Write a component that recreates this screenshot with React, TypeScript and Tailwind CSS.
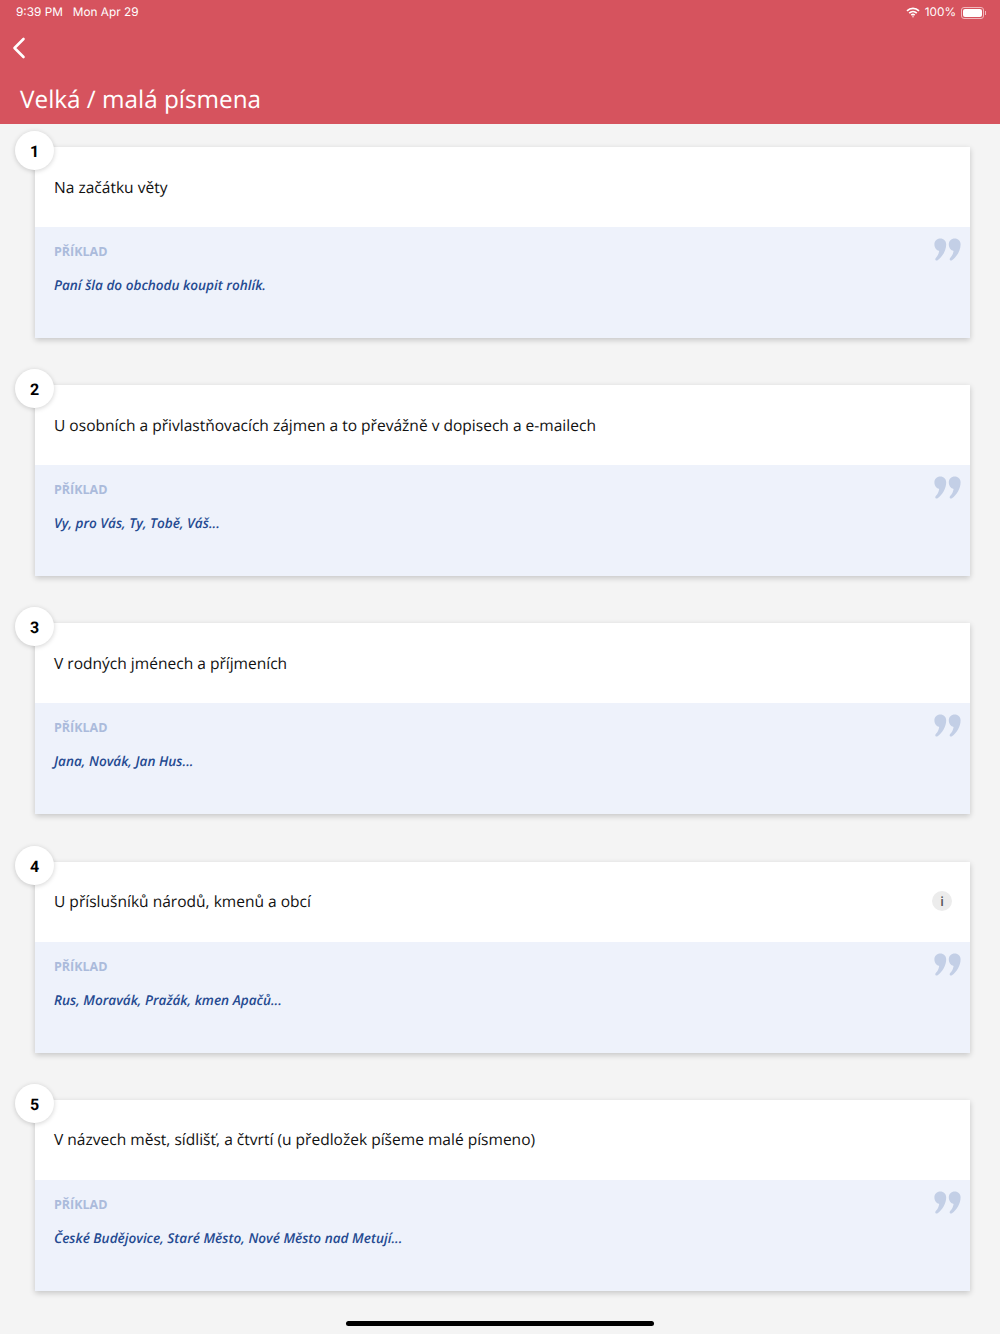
import React from "react";

const items = [
  { t: "Na začátku věty", e: "Paní šla do obchodu koupit rohlík." },
  { t: "U osobních a přivlastňovacích zájmen a to převážně v dopisech a e-mailech", e: "Vy, pro Vás, Ty, Tobě, Váš..." },
  { t: "V rodných jménech a příjmeních", e: "Jana, Novák, Jan Hus..." },
  { t: "U příslušníků národů, kmenů a obcí", e: "Rus, Moravák, Pražák, kmen Apačů...", info: true },
  { t: "V názvech měst, sídlišť, a čtvrtí (u předložek píšeme malé písmeno)", e: "České Budějovice, Staré Město, Nové Město nad Metují..." },
];

function Quote() {
  return (
    <svg width="27" height="23" viewBox="0 0 27 23" className="absolute right-[9px] top-[11px]" fill="#c3cfe6">
      <path d="M6.3 0.5C9.7 0.5 12.2 3 12.2 6.4C12.2 12.5 8.2 19 3.6 22.2C2.6 22.9 1 22.2 1.3 20.9C1.4 20.4 1.7 20.1 2 19.8C3.5 18.2 4.8 15.7 5.2 12.9C2.5 12.4 0.4 9.8 0.4 6.5C0.4 3 2.9 0.5 6.3 0.5Z" />
      <path d="M20.7 0.5C24.1 0.5 26.6 3 26.6 6.4C26.6 12.5 22.6 19 18 22.2C17 22.9 15.4 22.2 15.7 20.9C15.8 20.4 16.1 20.1 16.4 19.8C17.9 18.2 19.2 15.7 19.6 12.9C16.9 12.4 14.8 9.8 14.8 6.5C14.8 3 17.3 0.5 20.7 0.5Z" />
    </svg>
  );
}

function Card({ n, t, e, info }: { n: number; t: string; e: string; info?: boolean }) {
  return (
    <div className="relative ml-[35px] mr-[30px] mb-[47.2px] bg-white shadow-[0_2px_6px_rgba(0,0,0,0.2)]">
      <div className="absolute left-[-20px] top-[-16px] flex h-[39px] w-[39px] items-center justify-center rounded-full bg-white pt-[3px] text-[16px] font-bold text-black shadow-[0_1px_5px_rgba(0,0,0,0.18)] [font-family:Roboto,sans-serif]">
        {n}
      </div>
      <div className="flex h-[80px] items-start justify-between pl-[19px] pr-[18px] pt-[27.6px]">
        <div className="text-[15.56px] leading-[24px] text-[#111111]">{t}</div>
        {info && (
          <div className="mt-[2px] flex h-[20px] w-[20px] items-center justify-center rounded-full bg-[#ececec] text-[13px] font-semibold leading-none text-[#555555]">
            i
          </div>
        )}
      </div>
      <div className="relative h-[111px] bg-[#eef2fb] pl-[19px] pt-[16px]">
        <Quote />
        <div className="text-[12.5px] font-bold leading-[18px] text-[#abbbdb]">PŘÍKLAD</div>
        <div className="mt-[15px] text-[13.58px] font-semibold italic leading-[18px] text-[#254a91]">{e}</div>
      </div>
    </div>
  );
}

export default function App() {
  return (
    <div className="relative h-[1334px] w-[1000px] overflow-hidden bg-[#f4f4f4] [font-family:'Open_Sans',sans-serif] [text-rendering:geometricPrecision]">
      <header className="h-[124px] bg-[#d6535e] text-white">
        <div className="flex h-[24px] items-center justify-between pl-[16px] pr-[14px] pt-[1px] text-[11.8px] [font-family:Inter,sans-serif]">
          <div className="flex gap-[10px]">
            <span>9:39 PM</span>
            <span>Mon Apr 29</span>
          </div>
          <div className="flex items-center gap-[5px]">
            <svg width="14" height="11" viewBox="0 0 14 11" fill="none" stroke="#fff" strokeWidth="1.7">
              <path d="M1 3.9a8.6 8.6 0 0 1 12 0" />
              <path d="M3.2 6.1a5.5 5.5 0 0 1 7.6 0" />
              <path d="M5.3 8.2a2.5 2.5 0 0 1 3.4 0" />
              <circle cx="7" cy="9.7" r="0.7" fill="#fff" stroke="none" />
            </svg>
            <span>100%</span>
            <div className="flex items-center">
              <div className="h-[12px] w-[23px] rounded-[3px] border border-[#f1b8bd] p-[1px]">
                <div className="h-full w-full rounded-[2px] bg-white" />
              </div>
              <div className="ml-[1px] h-[4px] w-[1px] bg-[#f1b8bd]" />
            </div>
          </div>
        </div>
        <div className="h-[48px] pl-[12px] pt-[13px]">
          <svg width="14" height="22" viewBox="0 0 14 22" fill="none" stroke="#fff" strokeWidth="2.6" strokeLinecap="round" strokeLinejoin="round">
            <path d="M11.5 2L2.5 11L11.5 20" />
          </svg>
        </div>
        <div className="pl-[20px] text-[24.3px] leading-[56px]">Velká / malá písmena</div>
      </header>
      <main className="pt-[23px]">
        {items.map((it, i) => (
          <Card key={i} n={i + 1} t={it.t} e={it.e} info={it.info} />
        ))}
      </main>
      <div className="absolute bottom-[8px] left-[346px] h-[5px] w-[308px] rounded-full bg-black" />
    </div>
  );
}
